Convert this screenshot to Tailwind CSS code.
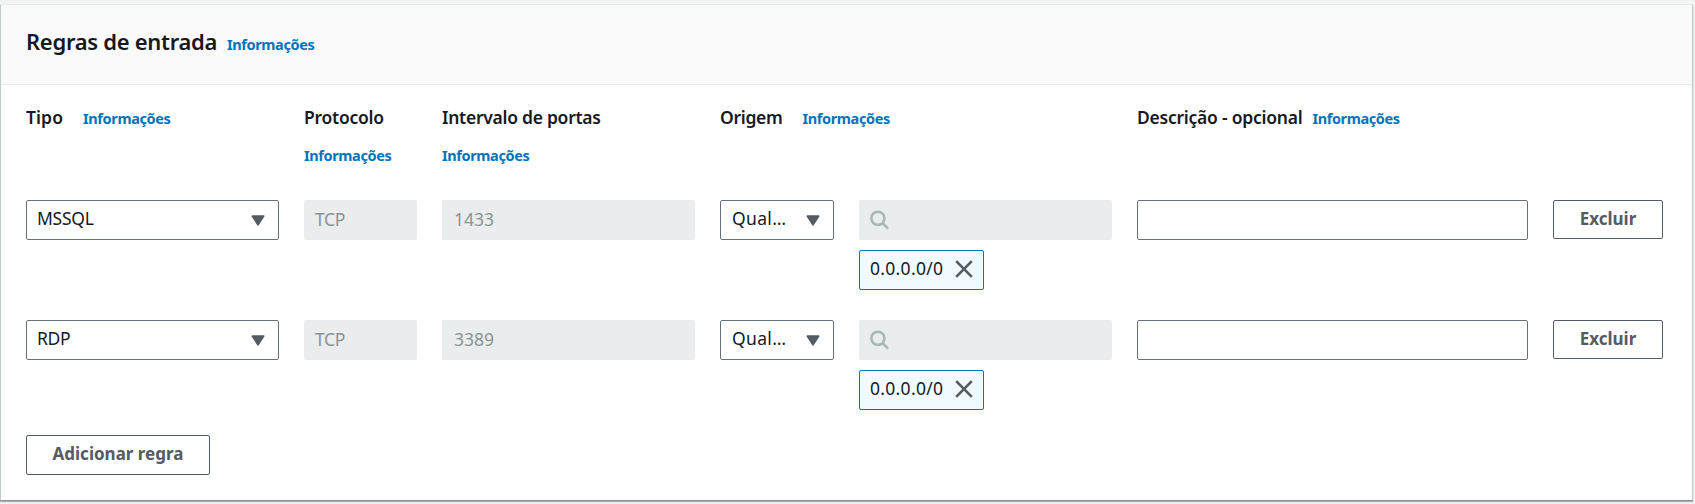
<!DOCTYPE html>
<html lang="pt-BR">
<head>
<meta charset="utf-8">
<title>Regras de entrada</title>
<script src="https://cdn.jsdelivr.net/npm/@tailwindcss/browser@4"></script>
</head>
<body class="h-[504px] overflow-hidden bg-[#f2f3f3] pt-1 font-['Noto_Sans',sans-serif] text-[17.5px] text-[#16191f]">
<svg class="hidden">
  <symbol id="caret" viewBox="0 0 14 11"><path d="M1.2 1h11.6L7 10z" fill="#545b64" stroke="#545b64" stroke-width="1.4" stroke-linejoin="round"/></symbol>
  <symbol id="search" viewBox="0 0 20 20"><g fill="none" stroke="#aab7b8" stroke-width="2.6"><circle cx="8.9" cy="8.3" r="6.6"/><path d="M13.5 13l5.6 5.6"/></g></symbol>
  <symbol id="close" viewBox="0 0 18 18"><path d="M1.2 1.2l15.6 15.6M16.8 1.2L1.2 16.8" fill="none" stroke="#545b64" stroke-width="2.6"/></symbol>
</svg>
<section class="mr-[2px] h-[497px] w-[1693px] border border-x-[#c0cbca] border-t-[#e6eaea] border-b-[#879596] bg-white shadow-[0_1px_1px_0_rgba(0,28,36,0.3)]">
  <header class="flex h-20 items-baseline border-b border-[#e6eaea] bg-[#fafafa] pt-[21px] pl-[25px]">
    <h2 class="w-[201px] whitespace-nowrap text-[22px] leading-[30px] font-semibold tracking-[-0.3px]">Regras de entrada</h2>
    <a class="text-[14.5px] font-bold tracking-[-0.38px] text-[#0073bb]">Informações</a>
  </header>

  <div class="pt-[14px] pl-[25px]">
    <div class="grid h-[101px] grid-cols-[253px_113px_253px_392px_391px_110px] gap-x-[25px] font-semibold leading-[37px] whitespace-nowrap">
      <div class="flex items-baseline gap-5"><span class="tracking-[0.1px]">Tipo</span><a class="text-[14.5px] font-bold tracking-[-0.38px] text-[#0073bb]">Informações</a></div>
      <div class="flex flex-col"><span class="tracking-[-0.25px]">Protocolo</span><a class="text-[14.5px] leading-[38px] font-bold tracking-[-0.38px] text-[#0073bb]">Informações</a></div>
      <div class="flex flex-col"><span class="tracking-[-0.27px]">Intervalo de portas</span><a class="text-[14.5px] leading-[38px] font-bold tracking-[-0.38px] text-[#0073bb]">Informações</a></div>
      <div class="flex items-baseline gap-5"><span class="tracking-[-0.3px]">Origem</span><a class="text-[14.5px] font-bold tracking-[-0.38px] text-[#0073bb]">Informações</a></div>
      <div class="flex items-baseline gap-2.5"><span class="tracking-[-0.24px]">Descrição - opcional</span><a class="text-[14.5px] font-bold tracking-[-0.38px] text-[#0073bb]">Informações</a></div>
    </div>

    <div class="grid h-[120px] grid-cols-[253px_113px_253px_114px_253px_391px_110px] items-start gap-x-[25px]">
      <div class="flex h-10 items-center justify-between rounded-[2px] border border-[#687078] pr-[13px] pl-[10px]"><span class="pb-[3px] tracking-[-0.25px]">MSSQL</span><svg class="h-[11px] w-[14px]"><use href="#caret"/></svg></div>
      <div class="flex h-10 items-center rounded-[2px] bg-[#e9eded] pb-px pl-[11px] tracking-[-0.4px] text-[#879596]">TCP</div>
      <div class="flex h-10 items-center rounded-[2px] bg-[#e9eded] pb-px pl-3 text-[#879596]">1433</div>
      <div class="flex h-10 items-center justify-between rounded-[2px] border border-[#687078] pr-[13px] pl-[11px]"><span class="pb-[3px] tracking-[0.35px]">Qual…</span><svg class="h-[11px] w-[14px]"><use href="#caret"/></svg></div>
      <div class="flex flex-col items-start gap-2.5">
        <div class="flex h-10 w-full items-center rounded-[2px] bg-[#e9eded] pl-[10px]"><svg class="h-5 w-5"><use href="#search"/></svg></div>
        <div class="flex h-10 w-[125px] items-center justify-between rounded-[2px] border border-[#0073bb] bg-[#f1faff] pr-[10px] pl-[10px]"><span class="pb-[3px] tracking-[0.3px]">0.0.0.0/0</span><svg class="mb-[2px] h-[18px] w-[18px]"><use href="#close"/></svg></div>
      </div>
      <div class="h-10 rounded-[2px] border border-[#687078]"></div>
      <button class="h-[39px] rounded-[2px] border border-[#545b64] pb-[2px] text-[17px] font-bold text-[#545b64]">Excluir</button>
    </div>

    <div class="grid h-[115px] grid-cols-[253px_113px_253px_114px_253px_391px_110px] items-start gap-x-[25px]">
      <div class="flex h-10 items-center justify-between rounded-[2px] border border-[#687078] pr-[13px] pl-[10px]"><span class="pb-[3px] tracking-[-0.3px]">RDP</span><svg class="h-[11px] w-[14px]"><use href="#caret"/></svg></div>
      <div class="flex h-10 items-center rounded-[2px] bg-[#e9eded] pb-px pl-[11px] tracking-[-0.4px] text-[#879596]">TCP</div>
      <div class="flex h-10 items-center rounded-[2px] bg-[#e9eded] pb-px pl-3 text-[#879596]">3389</div>
      <div class="flex h-10 items-center justify-between rounded-[2px] border border-[#687078] pr-[13px] pl-[11px]"><span class="pb-[3px] tracking-[0.35px]">Qual…</span><svg class="h-[11px] w-[14px]"><use href="#caret"/></svg></div>
      <div class="flex flex-col items-start gap-2.5">
        <div class="flex h-10 w-full items-center rounded-[2px] bg-[#e9eded] pl-[10px]"><svg class="h-5 w-5"><use href="#search"/></svg></div>
        <div class="flex h-10 w-[125px] items-center justify-between rounded-[2px] border border-[#0073bb] bg-[#f1faff] pr-[10px] pl-[10px]"><span class="pb-[3px] tracking-[0.3px]">0.0.0.0/0</span><svg class="mb-[2px] h-[18px] w-[18px]"><use href="#close"/></svg></div>
      </div>
      <div class="h-10 rounded-[2px] border border-[#687078]"></div>
      <button class="h-[39px] rounded-[2px] border border-[#545b64] pb-[2px] text-[17px] font-bold text-[#545b64]">Excluir</button>
    </div>

    <button class="block h-10 w-[184px] rounded-[2px] border border-[#545b64] pb-[3px] text-[17px] font-bold text-[#545b64]">Adicionar regra</button>
  </div>
</section>
</body>
</html>
